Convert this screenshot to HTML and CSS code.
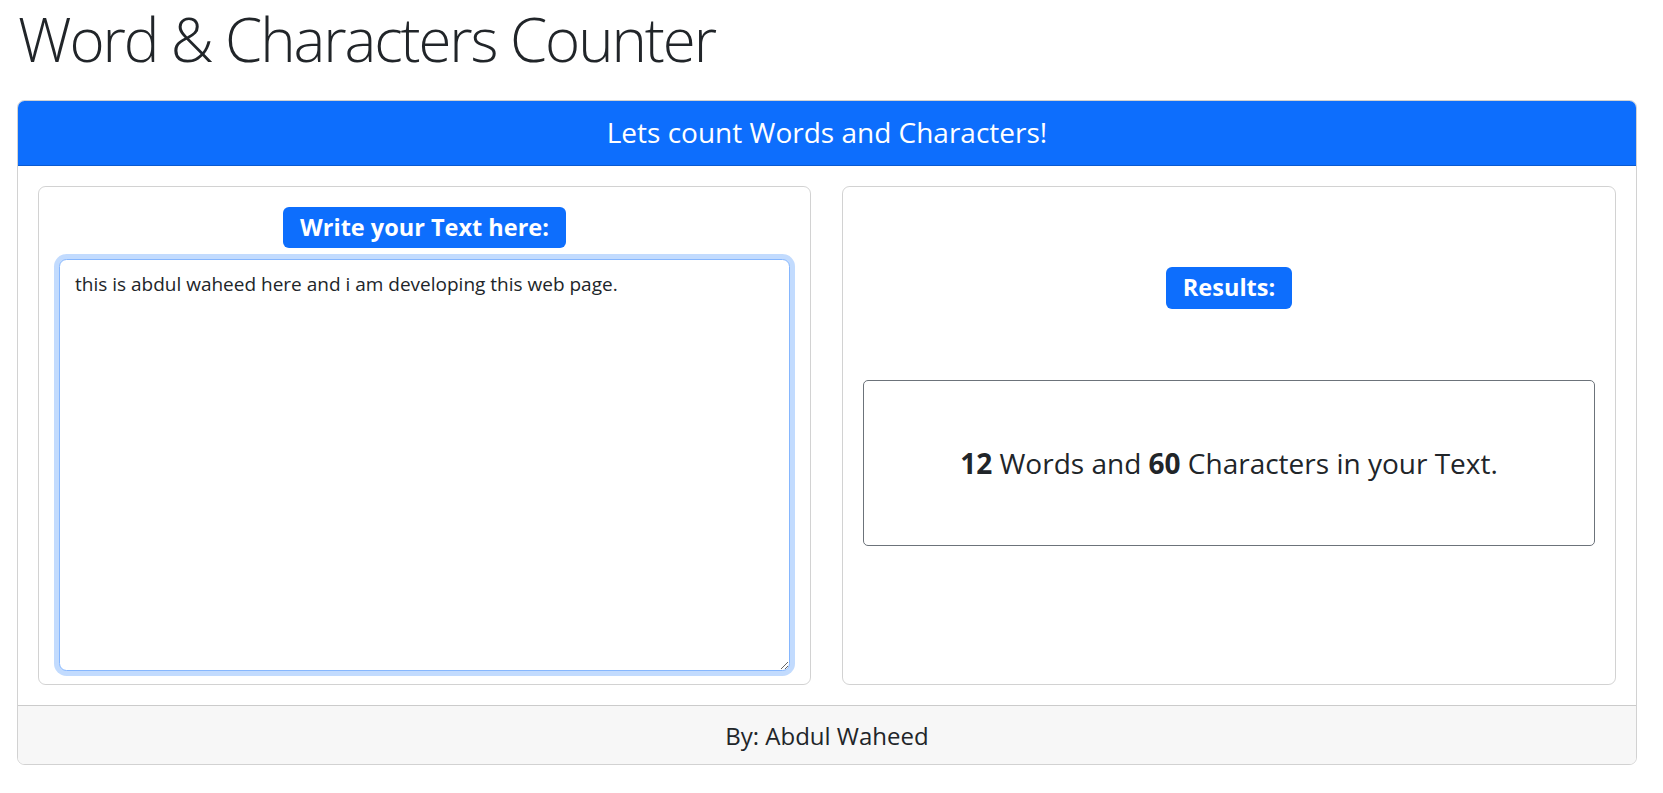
FILE: index.html
```html
<!DOCTYPE html>
<html lang="en">
<head>
<meta charset="utf-8">
<title>Word &amp; Characters Counter</title>
<link rel="stylesheet" href="styles.css">
</head>
<body>
<div class="page">
  <h1 class="title">Word &amp; Characters Counter</h1>
  <div class="card">
    <div class="card-header">
      <h4 class="header-title">Lets count Words and Characters!</h4>
    </div>
    <div class="card-body">
      <div class="panel panel-input">
        <label class="badge" for="text">Write your Text here:</label>
        <textarea id="text" class="text-input">this is abdul waheed here and i am developing this web page.</textarea>
      </div>
      <div class="panel panel-result">
        <span class="badge">Results:</span>
        <div class="result-box">
          <p class="result-text"><b>12</b> Words and <b>60</b> Characters in your Text.</p>
        </div>
      </div>
    </div>
    <div class="card-footer">By: Abdul Waheed</div>
  </div>
</div>
</body>
</html>
```
FILE: styles.css
```css
* { box-sizing: border-box; }
html, body { margin: 0; padding: 0; background: #fff; }
body {
  font-family: "Open Sans", "Noto Sans", sans-serif;
  color: #212529;
  font-size: 20px;
}
.page {
  padding: 0 26px 0 17px;
}
.title {
  margin: 3px 0 25px 1px;
  font-size: 60px;
  font-weight: 300;
  line-height: 72px;
  letter-spacing: -2.1px;
}
.card {
  border: 1px solid rgba(0,0,0,.175);
  border-radius: 7.5px;
  overflow: hidden;
}
.card-header {
  background: #0d6efd;
  color: #fff;
  height: 65px;
  border-bottom: 1px solid rgba(0,0,0,.175);
  display: flex;
  align-items: center;
  justify-content: center;
}
.header-title {
  margin: 0;
  font-size: 28px;
  font-weight: 400;
  line-height: 1.2;
}
.card-body {
  padding: 20px;
  display: grid;
  grid-template-columns: 773px 774px;
  column-gap: 31px;
}
.panel {
  border: 1px solid rgba(0,0,0,.175);
  border-radius: 7.5px;
  display: flex;
  flex-direction: column;
  align-items: center;
}
.panel-input {
  padding: 20px 20px 13px;
}
.panel-result {
  padding: 80px 20px 20px;
}
.badge {
  display: inline-flex;
  align-items: center;
  justify-content: center;
  background: #0d6efd;
  color: #fff;
  font-weight: 700;
  font-size: 23.5px;
  line-height: 1;
  border-radius: 6px;
  padding: 0 17px;
  height: 41px;
}
.panel-result .badge { height: 42px; }
.text-input {
  display: block;
  width: 100%;
  height: 412px;
  margin-top: 11px;
  padding: 10px 15px 7.5px;
  font-family: inherit;
  font-size: 19px;
  line-height: 1.55;
  color: #212529;
  background: #fff;
  border: 1px solid #86b7fe;
  border-radius: 7.5px;
  box-shadow: 0 0 0 5px rgba(13,110,253,.25);
  outline: none;
  resize: both;
}
.result-box {
  margin-top: 71px;
  width: 100%;
  height: 166px;
  border: 1px solid #6c737a;
  border-radius: 5px;
  display: flex;
  align-items: center;
  justify-content: center;
}
.result-text {
  margin: 0;
  font-size: 28px;
  line-height: 1.5;
}
.result-text b { font-weight: 700; }
.card-footer {
  height: 59px;
  background: #f7f7f7;
  border-top: 1px solid rgba(0,0,0,.175);
  display: flex;
  align-items: center;
  justify-content: center;
  font-size: 24px;
}
```
